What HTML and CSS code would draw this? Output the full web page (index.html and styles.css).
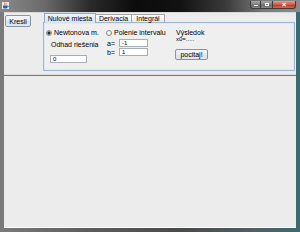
FILE: index.html
```html
<!DOCTYPE html>
<html>
<head>
<meta charset="utf-8">
<link rel="stylesheet" href="styles.css">
</head>
<body>
<div class="window">
  <div class="titlebar">
    <svg class="appicon" width="7" height="7" viewBox="0 0 7 7">
      <rect x="0" y="0" width="7" height="7" fill="#e8e8e8"/>
      <path d="M2.5 0.5 C3.5 1.5 1.8 2 3 3" stroke="#e05a1a" stroke-width="0.8" fill="none"/>
      <path d="M4 0.8 C4.8 1.6 3.5 2 4.3 3" stroke="#e05a1a" stroke-width="0.7" fill="none"/>
      <path d="M1 3.5 H5.5 V5 C5.5 6 4.5 6.5 3.2 6.5 C2 6.5 1 6 1 5 Z" fill="#2d5fa8"/>
      <path d="M5.5 4 H6.3 V5 H5.5" stroke="#2d5fa8" stroke-width="0.6" fill="none"/>
    </svg>
    <div class="spacer"></div>
    <div class="controls">
      <span class="ctl min"><span class="g-min"></span></span>
      <span class="ctl max"><span class="g-max"></span></span>
      <span class="ctl close"><span class="g-x">×</span></span>
    </div>
  </div>
  <div class="client">
    <div class="top">
      <div class="btn kresli">Kresli</div>
      <div class="tabs">
        <div class="tabrow">
          <span class="tab sel">Nulové miesta</span>
          <span class="tab">Derivacia</span>
          <span class="tab">Integrál</span>
        </div>
        <div class="panel">
          <div class="col c1">
            <div class="radio"><span class="dot on"></span><span>Newtonova m.</span></div>
            <span class="lbl odhad">Odhad riešenia</span>
            <span class="field f0">0</span>
          </div>
          <div class="col c2">
            <div class="radio"><span class="dot"></span><span>Polenie intervalu</span></div>
            <div class="row ra"><span class="lbl eq">a=</span><span class="field fab">-1</span></div>
            <div class="row rb"><span class="lbl eq">b=</span><span class="field fab">1</span></div>
          </div>
          <div class="col c3">
            <span class="lbl vys">Výsledok</span>
            <span class="lbl x0">x0=.....</span>
            <div class="btn pocitaj">pocitaj!</div>
          </div>
        </div>
      </div>
    </div>
    <div class="divider"></div>
    <div class="bottom"></div>
  </div>
</div>
</body>
</html>
```

FILE: styles.css
```css
html, body {
  margin: 0;
  padding: 0;
}
body {
  width: 300px;
  height: 232px;
  overflow: hidden;
  font-family: "Liberation Sans", Arial, sans-serif;
  font-size: 7px;
  color: #000;
}
.window {
  width: 300px;
  height: 232px;
  box-sizing: border-box;
  padding: 0 4px 4px 4px;
  display: flex;
  flex-direction: column;
  background: linear-gradient(90deg, #7a7a7a 0%, #5c5c5c 30%, #4a4a4a 60%, #4f5f62 85%, #3b6a70 100%);
}
.titlebar {
  height: 12px;
  margin: 0 -4px;
  padding: 2px 0 0 2px;
  box-sizing: border-box;
  display: flex;
  align-items: flex-start;
  background: linear-gradient(90deg, #8a8a8a 0%, #6a6a6a 15%, #2a2a2a 30%, #0c0c0c 45%, #121212 60%, #3a3a3a 75%, #7a7a7a 88%, #8c8c8c 100%);
}
.appicon {
  display: block;
}
.spacer {
  flex: 1;
}
.controls {
  display: flex;
  margin-top: -1px;
  margin-right: 4px;
  height: 8px;
}
.ctl {
  height: 8px;
  box-sizing: border-box;
  border: 1px solid #3c3c3c;
  border-top: none;
  display: flex;
  align-items: center;
  justify-content: center;
  background: linear-gradient(#a9a9a9, #7d7d7d 50%, #5e5e5e 51%, #8a8a8a);
}
.min {
  width: 10px;
  border-radius: 0 0 0 3px;
  border-right: none;
}
.max {
  width: 12px;
  border-right: none;
}
.close {
  width: 24px;
  border-radius: 0 0 3px 0;
  background: linear-gradient(#e29a8c, #cf5b48 50%, #b8311d 51%, #d26a50);
}
.g-min {
  width: 4px;
  height: 1px;
  background: #fff;
  margin-top: 2px;
}
.g-max {
  width: 4px;
  height: 3px;
  border: 1px solid #fff;
  box-sizing: border-box;
}
.g-x {
  color: #fff;
  font-size: 8px;
  line-height: 6px;
  font-weight: bold;
}
.client {
  flex: 1;
  display: flex;
  flex-direction: column;
  background: #ececec;
  border-top: 1px solid #d8d8d8;
  border-bottom: 1px solid #ffffff;
}
.top {
  height: 61px;
  display: flex;
  align-items: flex-start;
}
.btn {
  box-sizing: border-box;
  border: 1px solid #8596ab;
  border-radius: 2px;
  display: flex;
  align-items: center;
  justify-content: center;
  line-height: 7px;
}
.kresli {
  width: 26px;
  height: 12px;
  margin: 2px 0 0 1px;
  background: linear-gradient(#f4f7fb, #e3eaf3 50%, #d6e0ec 51%, #dfe7f1);
}
.tabs {
  flex: 1;
  margin: 0 1px 0 12px;
  display: flex;
  flex-direction: column;
}
.tabrow {
  height: 9px;
  padding-left: 1px;
  display: flex;
  align-items: flex-end;
  position: relative;
  z-index: 1;
}
.tab {
  box-sizing: border-box;
  height: 8px;
  line-height: 7px;
  border: 1px solid #a4a4a4;
  border-bottom: none;
  border-left: none;
  background: linear-gradient(#fcfcfc, #eaeaea);
  display: flex;
  justify-content: center;
  align-items: center;
}
.tab:nth-child(2) {
  width: 36px;
}
.tab:nth-child(3) {
  width: 33px;
}
.tab.sel {
  width: 52px;
  height: 10px;
  margin-bottom: -1px;
  border: 1px solid #8fa8c8;
  border-bottom: none;
  background: linear-gradient(#edf3fa, #d4e3f3);
}
.panel {
  height: 49px;
  box-sizing: border-box;
  border: 1px solid #9fb6d3;
  box-shadow: inset 0 0 0 1px #dfe8f3;
  background: #efefef;
  padding: 6px 0 0 2px;
  display: flex;
  align-items: flex-start;
}
.col {
  display: flex;
  flex-direction: column;
  align-items: flex-start;
}
.c1 {
  width: 59px;
}
.c2 {
  width: 70px;
}
.lbl {
  line-height: 7px;
  white-space: nowrap;
}
.radio {
  display: flex;
  align-items: center;
  height: 7px;
  line-height: 7px;
  white-space: nowrap;
}
.dot {
  width: 6px;
  height: 6px;
  box-sizing: border-box;
  border-radius: 50%;
  border: 1px solid #8c8c8c;
  background: radial-gradient(circle at 40% 40%, #ffffff, #dcdcdc);
  margin-right: 2px;
}
.dot.on {
  background: radial-gradient(circle, #1e1e1e 0, #3a3a3a 1.4px, #e8e8e8 1.8px, #f6f6f6 100%);
}
.c2 .dot {
  margin-left: 1px;
}
.odhad {
  margin: 5px 0 0 5px;
}
.field {
  box-sizing: border-box;
  height: 8px;
  line-height: 6px;
  font-size: 6px;
  padding-left: 2px;
  background: #ffffff;
  border: 1px solid #a7adb6;
}
.f0 {
  width: 37px;
  margin: 7px 0 0 4px;
}
.row {
  display: flex;
  align-items: center;
  height: 8px;
}
.ra {
  margin-top: 3px;
}
.rb {
  margin-top: 1px;
}
.eq {
  width: 14px;
  padding-left: 2px;
  box-sizing: border-box;
}
.fab {
  width: 29px;
}
.vys {
  margin-left: 1px;
  line-height: 6px;
  height: 6px;
  margin-top: 1px;
}
.x0 {
  margin: 0 0 0 1px;
  font-size: 6px;
  line-height: 6px;
  height: 6px;
}
.pocitaj {
  width: 33px;
  height: 11px;
  margin-top: 7px;
  border-color: #8393a8;
  background: linear-gradient(#f5f7fa, #e6ebf1 50%, #d9e0e9 51%, #e2e8ef);
}
.divider {
  height: 1px;
  background: #7a7a7a;
  border-top: 1px solid #dadada;
}
.bottom {
  flex: 1;
  background: #ececec;
}
```
